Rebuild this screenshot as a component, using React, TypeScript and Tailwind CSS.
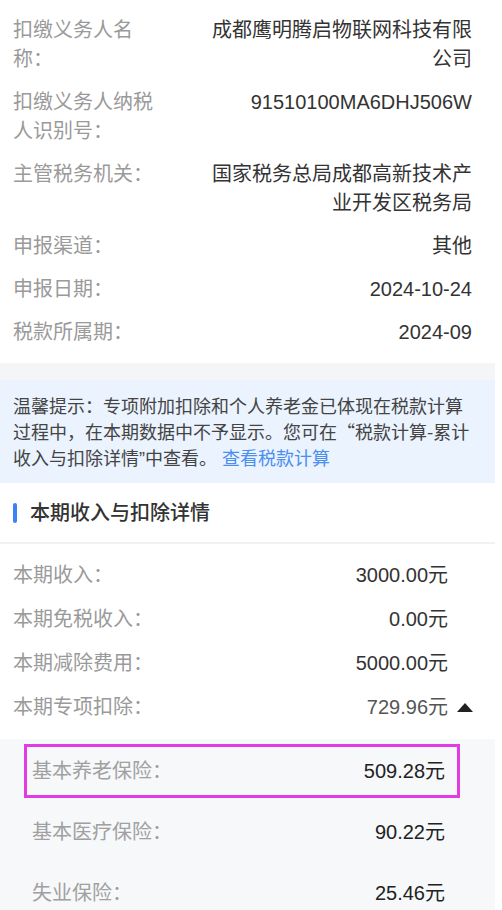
import React from 'react';

type Item = { label: string; value: string };

const baseInfo: Item[] = [
  { label: '扣缴义务人名称：', value: '成都鹰明腾启物联网科技有限公司' },
  { label: '扣缴义务人纳税人识别号：', value: '91510100MA6DHJ506W' },
  { label: '主管税务机关：', value: '国家税务总局成都高新技术产业开发区税务局' },
  { label: '申报渠道：', value: '其他' },
  { label: '申报日期：', value: '2024-10-24' },
  { label: '税款所属期：', value: '2024-09' },
];

const incomeRows: Item[] = [
  { label: '本期收入：', value: '3000.00元' },
  { label: '本期免税收入：', value: '0.00元' },
  { label: '本期减除费用：', value: '5000.00元' },
];

const specialRows: Item[] = [
  { label: '基本养老保险：', value: '509.28元' },
  { label: '基本医疗保险：', value: '90.22元' },
  { label: '失业保险：', value: '25.46元' },
];

function InfoRow({ label, value }: Item): JSX.Element {
  return (
    <div className="flex items-start justify-between py-[7px] text-[20px] leading-[29px]">
      <div className="w-[150px] text-[#9a9a9a]">{label}</div>
      <div className="w-[272px] text-right text-[#333]">{value}</div>
    </div>
  );
}

function AmountRow({ label, value, expanded }: Item & { expanded?: boolean }): JSX.Element {
  return (
    <div className="flex h-[44px] items-center justify-between pl-[13px] pr-[22px] text-[20px]">
      <span className="text-[#9a9a9a]">{label}</span>
      <div className="flex items-center">
        <span className={expanded ? 'text-[#555]' : 'text-[#333]'}>{value}</span>
        <span className="ml-[9px] flex w-[16px] justify-center">
          {expanded && (
            <svg width="16" height="9" viewBox="0 0 16 9">
              <polygon points="8,0 16,9 0,9" fill="#222" />
            </svg>
          )}
        </span>
      </div>
    </div>
  );
}

export default function App(): JSX.Element {
  return (
    <div className="h-[910px] w-[502px] overflow-hidden bg-white font-['Liberation_Sans','Noto_Sans_CJK_SC',sans-serif]">
      <div className="w-[495px]">
        <div className="pt-[9px] pb-[9px] pl-[13px] pr-[23px]">
          {baseInfo.map((item) => (
            <InfoRow key={item.label} label={item.label} value={item.value} />
          ))}
        </div>

        <div className="h-[17px] bg-[#f4f5f7]" />

        <div className="bg-[#eaf3fe] pt-[12px] pb-[11px] pl-[13px] pr-[23px] font-['Noto_Sans_CJK_SC',sans-serif] text-[18px] leading-[26px] text-[#444]">
          温馨提示：专项附加扣除和个人养老金已体现在税款计算过程中，在本期数据中不予显示。您可在“税款计算-累计收入与扣除详情
          <span className="font-['Liberation_Sans',sans-serif]">”</span>
          中查看。<span className="font-['Liberation_Sans',sans-serif]"> </span>
          <span className="text-[#4a8ef0]">查看税款计算</span>
        </div>

        <div className="box-content flex h-[59px] items-center border-b-2 border-[#f2f2f2] pl-[13px]">
          <span className="h-[20px] w-[4px] rounded-full bg-[#3e80f6]" />
          <span className="ml-[13px] text-[20px] font-medium text-[#333]">本期收入与扣除详情</span>
        </div>

        <div className="pt-[9px] pb-[10px]">
          {incomeRows.map((item) => (
            <AmountRow key={item.label} label={item.label} value={item.value} />
          ))}
          <AmountRow label="本期专项扣除：" value="729.96元" expanded />
        </div>

        <div className="flex flex-col gap-[7px] bg-[#f7f8fa] pt-[5px] pb-[10px]">
          {specialRows.map((item, index) => (
            <div
              key={item.label}
              className="relative flex h-[54px] items-center justify-between pl-[32px] pr-[50px] text-[20px]"
            >
              <span className="text-[#a0a0a0]">{item.label}</span>
              <span className="text-[#222]">{item.value}</span>
              {index === 0 && (
                <div className="absolute top-0 bottom-0 left-[24px] right-[35px] border-[3px] border-[#e23ae4]" />
              )}
            </div>
          ))}
        </div>
      </div>
    </div>
  );
}
